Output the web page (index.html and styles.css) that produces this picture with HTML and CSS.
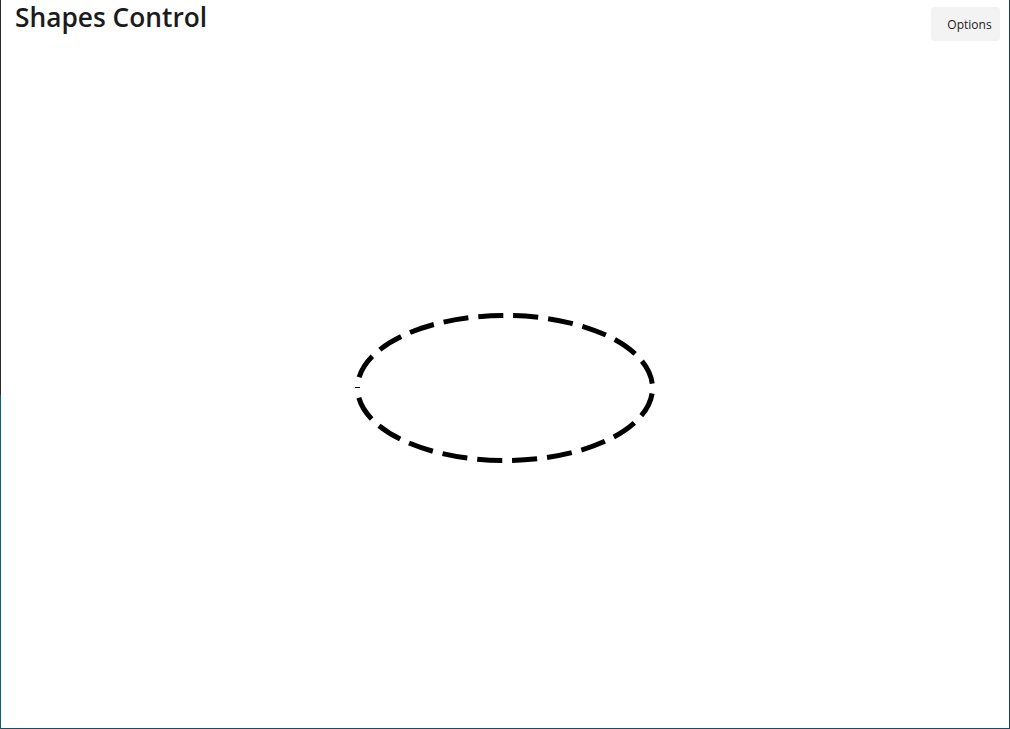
FILE: index.html
```html
<!DOCTYPE html>
<html lang="en">
<head>
<meta charset="utf-8">
<title>Shapes Control</title>
<link rel="stylesheet" href="styles.css">
</head>
<body>
<div class="window">
  <header class="header">
    <h1 class="title">Shapes Control</h1>
    <button class="options-btn" type="button">Options</button>
  </header>
  <main class="stage">
    <svg class="shape" width="300" height="150" viewBox="0 0 300 150" aria-label="Dashed ellipse">
      <path d="M 2.5 75 A 147.5 72.5 0 0 1 297.5 75 A 147.5 72.5 0 0 1 2.5 75 Z"
            fill="none" stroke="#000" stroke-width="5"
            stroke-dasharray="25 10" stroke-dashoffset="24"/>
    </svg>
  </main>
</div>
</body>
</html>
```

FILE: styles.css
```css
html, body {
  margin: 0;
  padding: 0;
  background: #ffffff;
}

.window {
  box-sizing: border-box;
  width: 1010px;
  height: 729px;
  display: flex;
  flex-direction: column;
  background: #ffffff;
  border-right: 1px solid #1d3a5c;
  border-bottom: 1px solid #1d4a66;
  border-left: 1px solid transparent;
  position: relative;
  font-family: "Open Sans", "Noto Sans", "Liberation Sans", sans-serif;
}

.window::before {
  content: "";
  position: absolute;
  left: -1px;
  top: 0;
  bottom: -1px;
  width: 1px;
  background: linear-gradient(to bottom, #2a2a28 0, #2a2a28 395px, #0f5f73 395px, #0f5f73 100%);
}

.header {
  height: 48px;
  display: flex;
  align-items: flex-start;
  justify-content: space-between;
  flex: 0 0 auto;
}

.title {
  margin: 0;
  padding: 0 0 0 14px;
  font-size: 26.3px;
  line-height: 35px;
  font-weight: 600;
  color: #1b1b1b;
  letter-spacing: 0;
}

.options-btn {
  margin: 7px 9px 0 0;
  width: 69px;
  height: 34px;
  padding: 1px 0 0 8px;
  border: none;
  border-radius: 4px;
  background: #f3f3f3;
  color: #1a1a1a;
  font-family: "Open Sans", "Noto Sans", "Liberation Sans", sans-serif;
  font-size: 12px;
  line-height: 16px;
}

.stage {
  flex: 1 1 auto;
  display: flex;
  align-items: center;
  justify-content: center;
}

.shape {
  display: block;
  overflow: visible;
}
```
